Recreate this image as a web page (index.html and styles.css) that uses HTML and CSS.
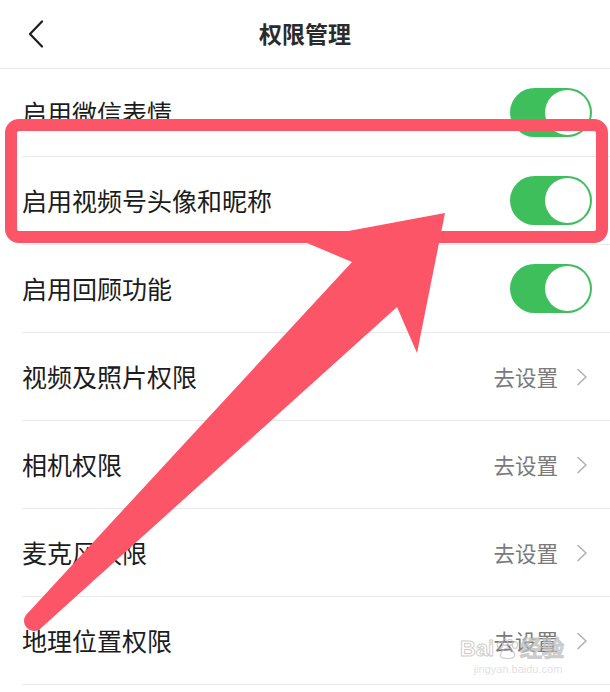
FILE: index.html
```html
<!DOCTYPE html>
<html lang="zh-CN">

<head>
    <meta charset="utf-8" />
    <title>权限管理</title>
    <link rel="stylesheet" href="styles.css">
</head>

<body>
    <div class="page">
        <div class="header">
            <svg class="back" width="16" height="28" viewBox="0 0 16 28">
                <path d="M14 1.5 L2 14 L14 26.5" fill="none" stroke="#1e1e1e" stroke-width="2.2" stroke-linecap="round" stroke-linejoin="round" />
            </svg>
            <div class="title">权限管理</div>
        </div>

        <div class="list">
            <div class="row">
                <span class="label">启用微信表情</span>
                <span class="switch on"><i></i></span>
            </div>
            <div class="row">
                <span class="label">启用视频号头像和昵称</span>
                <span class="switch on"><i></i></span>
            </div>
            <div class="row">
                <span class="label">启用回顾功能</span>
                <span class="switch on"><i></i></span>
            </div>
            <div class="row">
                <span class="label">视频及照片权限</span>
                <span class="go">去设置<svg class="chevron" width="12" height="18" viewBox="0 0 12 18"><path d="M2 1.5 L10 9 L2 16.5" /></svg></span>
            </div>
            <div class="row">
                <span class="label">相机权限</span>
                <span class="go">去设置<svg class="chevron" width="12" height="18" viewBox="0 0 12 18"><path d="M2 1.5 L10 9 L2 16.5" /></svg></span>
            </div>
            <div class="row">
                <span class="label">麦克风权限</span>
                <span class="go">去设置<svg class="chevron" width="12" height="18" viewBox="0 0 12 18"><path d="M2 1.5 L10 9 L2 16.5" /></svg></span>
            </div>
            <div class="row">
                <span class="label">地理位置权限</span>
                <span class="go">去设置<svg class="chevron" width="12" height="18" viewBox="0 0 12 18"><path d="M2 1.5 L10 9 L2 16.5" /></svg></span>
            </div>
        </div>

        <!-- annotation drawn over the screenshot -->
        <svg class="marks" width="610" height="692" viewBox="0 0 610 692">
            <rect x="11" y="125" width="591" height="112" rx="8" fill="none" stroke="#fc5567" stroke-width="12" />
            <path d="M26 615 L352 262 L300 240 L445 213 L417 353 L397 307 L40 629 A10 10 0 0 1 26 615 Z" fill="#fc5567" />
        </svg>

        <div class="watermark">
            <div class="wm-logo">Bai<svg width="24" height="20" viewBox="0 0 24 20">
                    <g fill="none" stroke="#bcbcbc" stroke-width="1.2">
                        <ellipse cx="5" cy="6" rx="2.6" ry="3.4" />
                        <ellipse cx="10" cy="3.4" rx="2.4" ry="3" />
                        <ellipse cx="15" cy="3.4" rx="2.4" ry="3" />
                        <ellipse cx="20" cy="6" rx="2.6" ry="3.4" />
                        <path d="M12.5 9 C8 9 4 15 6 18 C8 20 17 20 19 18 C21 15 17 9 12.5 9 Z" />
                    </g>
                </svg>经验</div>
            <div class="wm-url">jingyan.baidu.com</div>
        </div>
    </div>
</body>
</html>
```

FILE: styles.css
```css
body {
    margin: 0;
    background: #fff;
    font-family: "Noto Sans CJK SC", "Noto Sans", sans-serif;
}

.page {
    position: relative;
    width: 610px;
    height: 692px;
    overflow: hidden;
    background: #fff;
}

.header {
    position: relative;
    display: flex;
    align-items: center;
    justify-content: center;
    height: 68px;
    border-bottom: 1px solid #e8e8e8;
}

.header .back {
    position: absolute;
    left: 28px;
    top: 20px;
}

.title {
    font-size: 23px;
    font-weight: bold;
    color: #2b2b2b;
    margin-top: -2px;
}

.row {
    display: flex;
    align-items: center;
    justify-content: space-between;
    height: 87px;
    margin-left: 22px;
    padding-right: 18px;
    border-bottom: 1px solid #e8e8e8;
}

.label {
    font-size: 25px;
    color: #1c1c1c;
    line-height: 1;
}

.switch {
    position: relative;
    display: block;
    width: 82px;
    height: 49px;
    border-radius: 25px;
    background: #3ebf5c;
    box-sizing: border-box;
}

.switch i {
    position: absolute;
    top: 2px;
    right: 2px;
    width: 45px;
    height: 45px;
    border-radius: 50%;
    background: #fff;
}

.go {
    display: flex;
    align-items: center;
    font-size: 21.5px;
    color: #7a7a7a;
    line-height: 1;
    margin-right: 4px;
}

.chevron {
    display: block;
    margin-left: 18px;
}

.chevron path {
    fill: none;
    stroke: #b0b0b0;
    stroke-width: 1.6;
    stroke-linecap: round;
    stroke-linejoin: round;
}

.marks {
    position: absolute;
    left: 0;
    top: 0;
}

.watermark {
    position: absolute;
    left: 460px;
    top: 638px;
    width: 116px;
    text-align: center;
    color: rgba(255, 255, 255, 0.5);
}

.wm-logo {
    display: flex;
    align-items: center;
    font-family: "Liberation Sans", sans-serif;
    font-size: 22px;
    font-weight: bold;
    line-height: 22px;
    -webkit-text-stroke: 1px rgba(170, 170, 170, 0.6);
}

.wm-logo svg {
    margin: 0 1px;
    opacity: 0.7;
}

.wm-url {
    font-family: "Liberation Sans", sans-serif;
    font-size: 11px;
    margin-top: 3px;
    color: rgba(200, 200, 200, 0.55);
}
```
